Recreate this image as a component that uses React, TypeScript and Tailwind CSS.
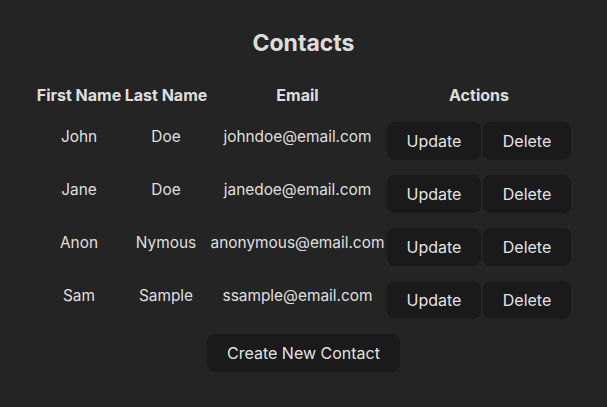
import React from "react";

const contacts = [
  { first: "John", last: "Doe", email: "johndoe@email.com" },
  { first: "Jane", last: "Doe", email: "janedoe@email.com" },
  { first: "Anon", last: "Nymous", email: "anonymous@email.com" },
  { first: "Sam", last: "Sample", email: "ssample@email.com" },
];

const btn =
  "h-[38px] w-full rounded-lg bg-[#1a1a1a] px-[19px] text-[16px] font-normal leading-[19px] text-[rgba(255,255,255,0.9)]";

export default function App() {
  return (
    <div
      className="flex min-h-[407px] w-full flex-col items-center bg-[#242424] pt-[27px] text-[rgba(255,255,255,0.87)]"
      style={{ fontFamily: "Inter, 'Noto Sans', sans-serif" }}
    >
      <h1 className="text-[23px] font-bold leading-8">Contacts</h1>
      <div className="mt-[24px] grid grid-cols-[86px_84px_175px_94px_88px] gap-x-[2px] gap-y-[15px] text-center text-[16px] leading-6">
        <div className="font-bold">First Name</div>
        <div className="font-bold">Last Name</div>
        <div className="font-bold">Email</div>
        <div className="col-span-2 font-bold">Actions</div>
        {contacts.map((c) => (
          <React.Fragment key={c.email}>
            <div className="pt-[3px] text-[15.4px]">{c.first}</div>
            <div className="pt-[3px] text-[15.4px]">{c.last}</div>
            <div className="pt-[3px] whitespace-nowrap text-[15.4px]">{c.email}</div>
            <button className={btn}>Update</button>
            <button className={btn}>Delete</button>
          </React.Fragment>
        ))}
      </div>
      <button className="mt-[15px] h-[38px] rounded-lg bg-[#1a1a1a] px-[20px] text-[16px] font-normal leading-[19px] text-[rgba(255,255,255,0.9)]">
        Create New Contact
      </button>
    </div>
  );
}
